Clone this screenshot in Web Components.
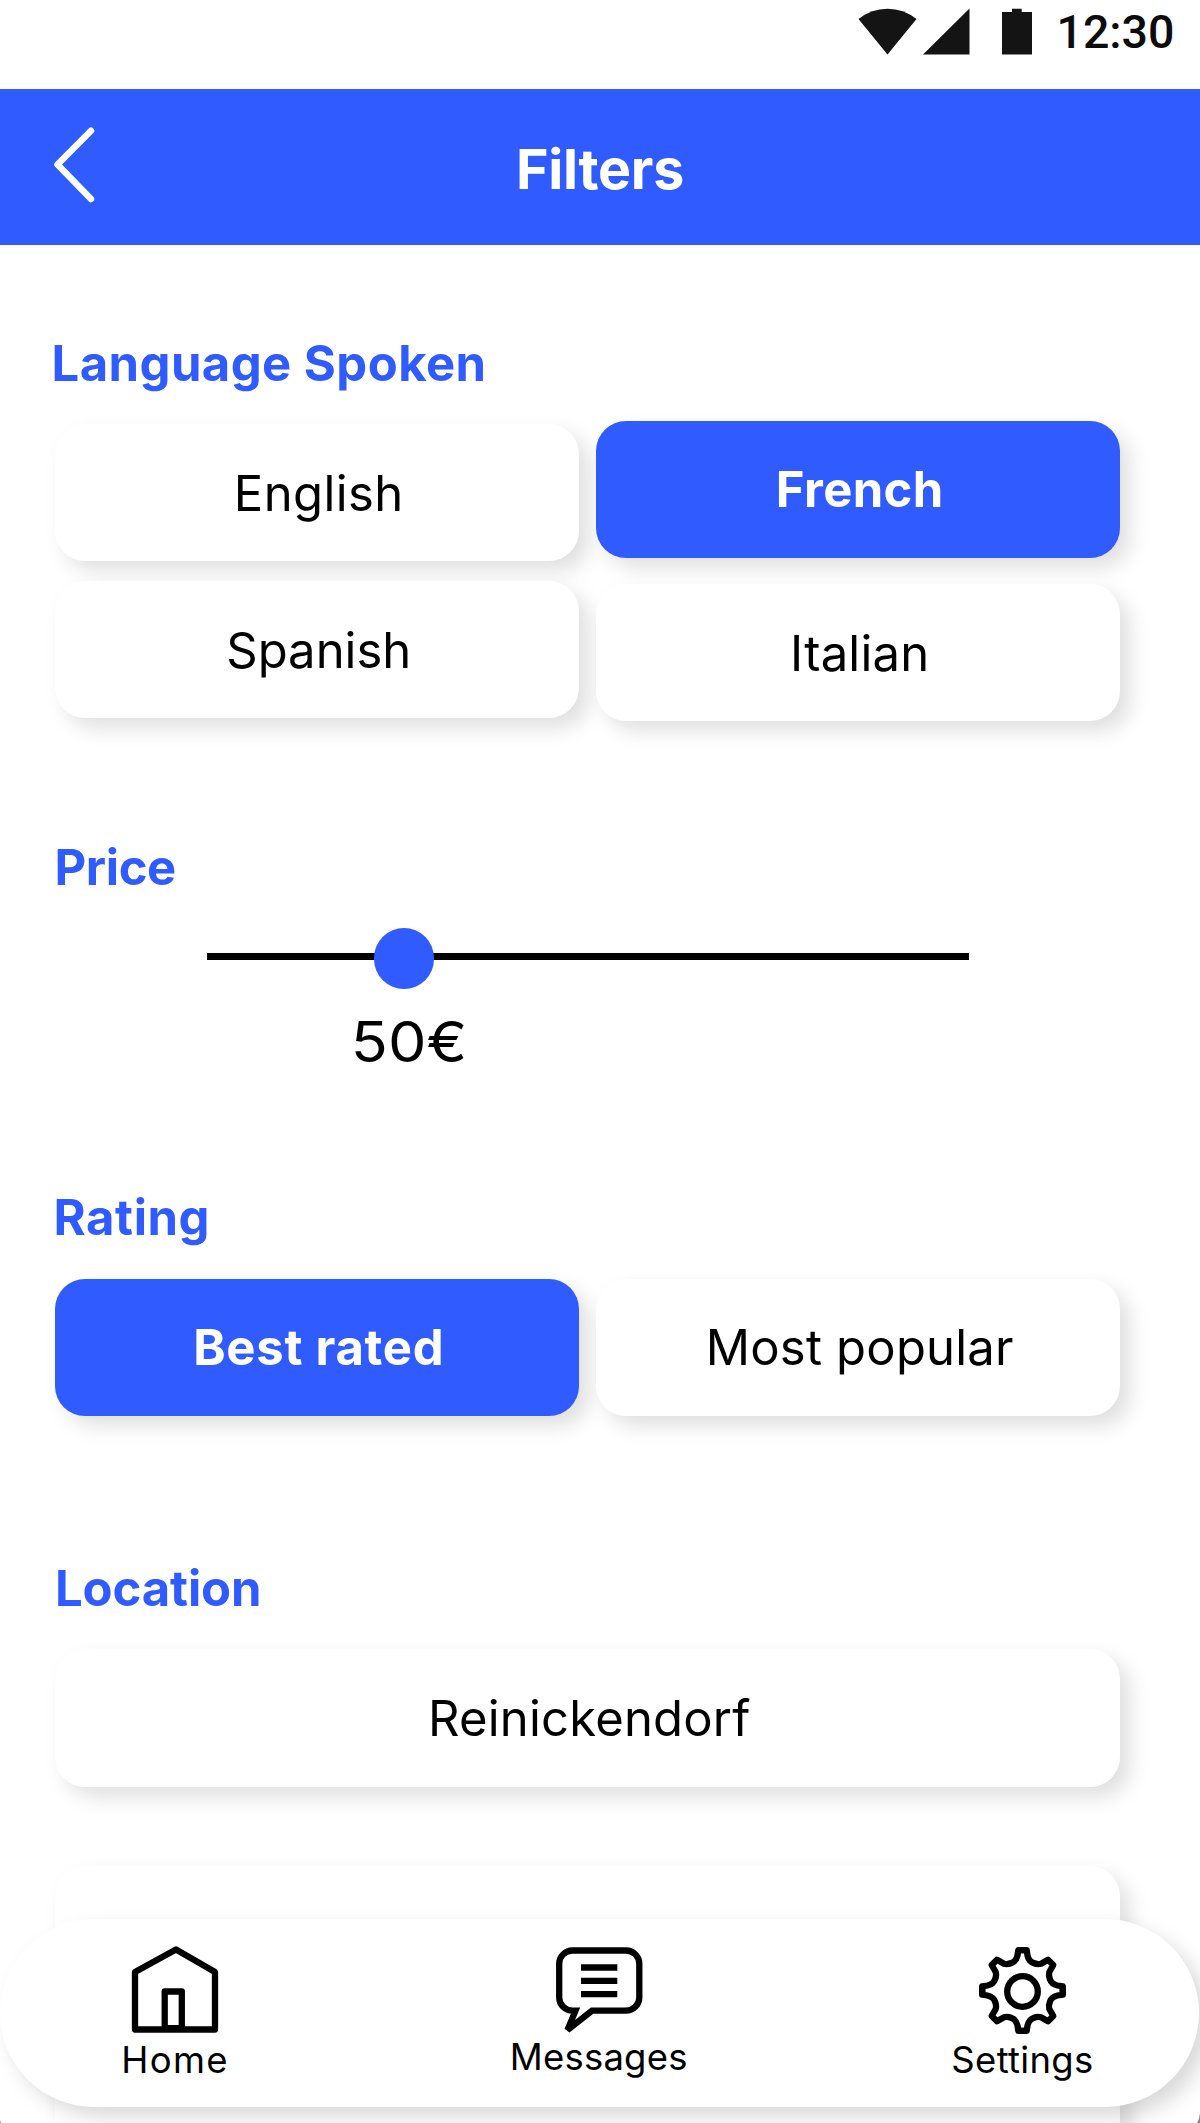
<!DOCTYPE html>
<html lang="en">
<head>
<meta charset="utf-8">
<title>Filters</title>
<style>
  html, body { margin: 0; padding: 0; background: #fff; }
  body { font-family: Inter, "Liberation Sans", sans-serif; color: #000; overflow: hidden; }
</style>
</head>
<body>
<filters-screen></filters-screen>
<script>
const define = (name, html) => {
  const template = document.createElement('template');
  template.innerHTML = html;
  customElements.define(name, class extends HTMLElement {
    constructor() {
      super();
      this.attachShadow({ mode: 'open' }).append(template.content.cloneNode(true));
    }
  });
};

define('status-bar', `
  <style>
    :host { display: flex; height: 89px; box-sizing: border-box; padding: 0 26px 0 857.5px; align-items: flex-start; }
    svg { display: block; flex: none; margin-top: 8px; }
    .cell { margin-left: 6.5px; }
    .battery { margin-left: 32px; }
    time { margin-left: 25px; font: 500 46.5px/54px Roboto, sans-serif; margin-top: 4.5px; color: #0c0c0c; }
  </style>
  <svg width="59" height="47" viewBox="0 0 59 47"><path d="M.5 11Q13.500 .7 29.500 .7T58.500 11L29.500 46.500Z" fill="#141414"/></svg>
  <svg class="cell" width="46.500" height="47" viewBox="0 0 46.500 47"><path d="M46.500 .5V46.500H0Z" fill="#141414"/></svg>
  <svg class="battery" width="30" height="47" viewBox="0 0 30 47"><path d="M0 4H10V.7H19.700V4H30V46.500H0Z" fill="#141414"/></svg>
  <time>12:30</time>
`);

define('app-header', `
  <style>
    :host { display: grid; grid-template-columns: 120px 1fr 120px; align-items: center; height: 155.500px; background: #2f5bff; color: #fff; }
    svg { display: block; margin: -3px 0 0 52px; }
    h1 { margin: 4px 0 0; font-size: 55.500px; line-height: 68px; font-weight: 700; text-align: center; letter-spacing: -.3px; }
  </style>
  <svg width="44" height="76" viewBox="0 0 44 76"><path d="M39 3.800L5.500 37.500 39 72" fill="none" stroke="#fff" stroke-width="6.500" stroke-linecap="round" stroke-linejoin="round"/></svg>
  <h1><slot></slot></h1>
`);

define('section-title', `
  <style>
    :host { display: block; color: #2f5bff; font-size: 49px; line-height: 60px; font-weight: 700; white-space: nowrap; letter-spacing: var(--track, 0); }
  </style>
  <slot></slot>
`);

define('choice-button', `
  <style>
    :host { display: flex; align-items: center; justify-content: center; box-sizing: border-box; height: 137px; padding: 2px 0 0 3.500px;
      border-radius: 30px; background: #fff; box-shadow: 10px 10px 20px rgba(0,0,0,.125); font-size: 49px; line-height: 60px; letter-spacing: var(--track, .2px); }
    :host([selected]) { background: #2f5bff; color: #fff; font-weight: 700; }
  </style>
  <slot></slot>
`);

define('price-slider', `
  <style>
    :host { display: block; }
    .track { display: flex; align-items: center; height: 60.500px; margin: 0 231px 0 207px; }
    .track::before, .track::after { content: ""; height: 6.600px; background: #000; margin-top: -3px; }
    .track::before { width: 169.500px; }
    .track::after { flex: 1; }
    .knob { width: 60.500px; height: 60.500px; border-radius: 50%; background: #2f5bff; margin: 0 -3px; z-index: 1; }
    .value { width: 200px; margin: 19.500px 0 0 308.500px; text-align: center; font-size: 56px; line-height: 68px; transform: scaleX(1.09); }
  </style>
  <div class="track"><div class="knob"></div></div>
  <div class="value"><slot></slot></div>
`);

define('nav-item', `
  <style>
    :host { display: flex; flex-direction: column; align-items: center; width: 210px; font-size: 36.500px; line-height: 44px; letter-spacing: var(--track, .2px); }
    ::slotted(svg) { display: block; margin-bottom: 4px; overflow: visible; }
  </style>
  <slot name="icon"></slot><slot></slot>
`);

define('bottom-nav', `
  <style>
    :host { display: flex; justify-content: space-between; box-sizing: border-box; height: 187.500px; padding: 27px 71.500px 0 70px;
      border-radius: 94px; background: #fff; box-shadow: 10px 10px 20px rgba(0,0,0,.15); }
    svg { fill: none; stroke: #000; stroke-width: 6.300; }
  </style>
  <nav-item style="--track:1.340px">
    <svg slot="icon" width="86" height="88" viewBox="0 0 86 88" stroke-linejoin="round"><path d="M3 26L44 3.500 83 26V83.500H3Z"/><path d="M32.700 45.500H49.800V82.200H32.700Z"/></svg>Home
  </nav-item>
  <nav-item>
    <svg slot="icon" width="86" height="85" viewBox="0 -1.500 86 85" stroke-miterlimit="2"><path d="M36 63.200H70A13.300 13.300 0 0 0 83.300 50V16.300A13.300 13.300 0 0 0 70 3H16.500A13.300 13.300 0 0 0 3.200 16.300V50A13.300 13.300 0 0 0 16.500 63.200H19.500L11.500 82.500Z"/><path d="M25 20H61.300M25 33.300H61.300M25 46.600H61.300"/></svg>Messages
  </nav-item>
  <nav-item style="--track:.320px">
    <svg slot="icon" width="87" height="88" viewBox="-43.500 -44.500 87 88" stroke-linejoin="round">
      <path id="arm" d="M4.200 -40.300H-4.200L-5 -35Q-6.500 -29 -11 -27.500Q-15 -25.800 -18.500 -26.800L-25.500 -30.800L-30.800 -25.500L-26.800 -18.500Q-25.800 -15 -27.500 -11Q-29 -6.500 -35 -5L-40.300 -4.200V4.200"/>
      <use href="#arm" transform="rotate(90)"/><use href="#arm" transform="rotate(180)"/><use href="#arm" transform="rotate(270)"/>
      <circle cy="1" r="15.300"/>
    </svg>Settings
  </nav-item>
`);

define('filters-screen', `
  <style>
    :host { display: block; position: relative; width: 1200px; height: 2123px; overflow: hidden; background: #fff; }
    main { display: flex; flex-direction: column; }
    .choices { display: flex; gap: 17px; margin: 0 80px 0 55px; }
    .choices > * { width: 524px; box-sizing: border-box; }
    .column { display: flex; flex-direction: column; }
    .languages { margin-top: 27.500px; }
    .left { padding-top: 3px; gap: 20px; }
    .right { gap: 26.500px; }
    .locations { display: flex; flex-direction: column; gap: 79.500px; margin: 30px 80px 0 55px; }
    bottom-nav { position: absolute; left: 0; right: 1px; top: 1919px; }
    .corners { position: absolute; left: 0; bottom: 0; display: block; }
  </style>
  <status-bar></status-bar>
  <app-header>Filters</app-header>
  <main>
    <section-title style="margin:89px 0 0 51.500px;--track:.440px">Language Spoken</section-title>
    <div class="choices languages">
      <div class="column left">
        <choice-button style="--track:.400px">English</choice-button>
        <choice-button style="--track:0">Spanish</choice-button>
      </div>
      <div class="column right">
        <choice-button selected style="height:136.500px;--track:.380px">French</choice-button>
        <choice-button>Italian</choice-button>
      </div>
    </div>
    <section-title style="margin:116.500px 0 0 54.500px;--track:-.400px">Price</section-title>
    <price-slider style="margin-top:30.500px">50€</price-slider>
    <section-title style="margin:112px 0 0 53.500px;--track:.600px">Rating</section-title>
    <div class="choices" style="margin-top:30.500px">
      <choice-button selected style="--track:.720px">Best rated</choice-button>
      <choice-button>Most popular</choice-button>
    </div>
    <section-title style="margin:143px 0 0 55px;--track:-.110px">Location</section-title>
    <div class="locations">
      <choice-button style="height:138px">Reinickendorf</choice-button>
      <choice-button style="height:300px"></choice-button>
    </div>
  </main>
  <bottom-nav></bottom-nav>
  <svg class="corners" width="1200" height="12" viewBox="0 0 1200 12"><path d="M1200 2Q1199.500 8 1197 12H1200ZM0 9L1 12H0Z" fill="#888"/></svg>
`);
</script>
</body>
</html>
